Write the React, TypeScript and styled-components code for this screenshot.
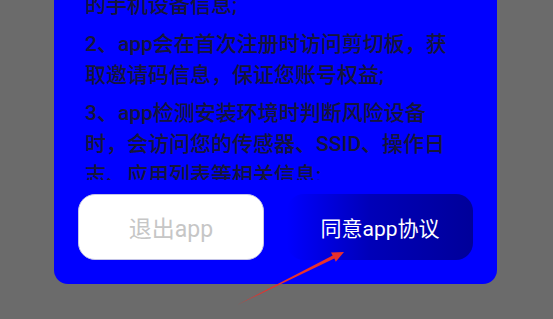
import React from "react";
import styled, { createGlobalStyle } from "styled-components";

const Global = createGlobalStyle`
  html, body { margin: 0; padding: 0; height: 100%; overflow: hidden; }
  body { background: #6b6b6b; font-family: Roboto, "Noto Sans CJK SC", sans-serif; }
`;

const Page = styled.div`
  position: relative;
  width: 553px;
  height: 319px;
  background: #6b6b6b;
  padding-left: 54px;
  box-sizing: border-box;
`;

const Dialog = styled.div`
  width: 443px;
  background: #0000ff;
  border-radius: 0 0 14px 14px;
  display: flex;
  flex-direction: column;
  gap: 14px;
  padding-bottom: 24px;
`;

const Scroll = styled.div`
  height: 180px;
  overflow: hidden;
  padding: 0 40px 0 31px;
`;

const Body = styled.div`
  margin-top: -10px;
  display: flex;
  flex-direction: column;
  gap: 7.5px;
`;

const Para = styled.p`
  margin: 0;
  font-size: 21px;
  font-weight: 500;
  line-height: 31px;
  color: #16163a;
`;

const Actions = styled.div`
  display: grid;
  grid-template-columns: 186px 186px;
  gap: 23px;
  padding: 0 24px;
`;

const Button = styled.button<{ $primary?: boolean }>`
  height: 66px;
  border-radius: 17px;
  font-family: Roboto, "Noto Sans CJK SC", sans-serif;
  display: flex;
  align-items: center;
  justify-content: center;
  padding: 0;
  cursor: pointer;
  ${(p) =>
    p.$primary
      ? `
    border: none;
    background: linear-gradient(to right, #0000ff 0%, #0000b8 45%, #00009a 100%);
    color: #ffffff;
    font-size: 21px;
  `
      : `
    border: 1.5px solid #c4c4e6;
    background: #ffffff;
    color: #c6c6c6;
    font-size: 23px;
  `}
`;

const Arrow = styled.svg`
  position: absolute;
  left: 0;
  top: 0;
  pointer-events: none;
`;

export default function App() {
  return (
    <Page>
      <Global />
      <Dialog>
        <Scroll>
          <Body>
            <Para>的手机设备信息;</Para>
            <Para>2、app会在首次注册时访问剪切板，获取邀请码信息，保证您账号权益;</Para>
            <Para>3、app检测安装环境时判断风险设备时，会访问您的传感器、SSID、操作日志、应用列表等相关信息;</Para>
          </Body>
        </Scroll>
        <Actions>
          <Button>退出app</Button>
          <Button $primary>同意app协议</Button>
        </Actions>
      </Dialog>
      <Arrow width="553" height="319" viewBox="0 0 553 319">
        <polygon
          points="237,305 332.7,255.4 331,252.4 344,252 335.8,261.8 334.3,258.6"
          fill="#e8302c"
        />
      </Arrow>
    </Page>
  );
}
